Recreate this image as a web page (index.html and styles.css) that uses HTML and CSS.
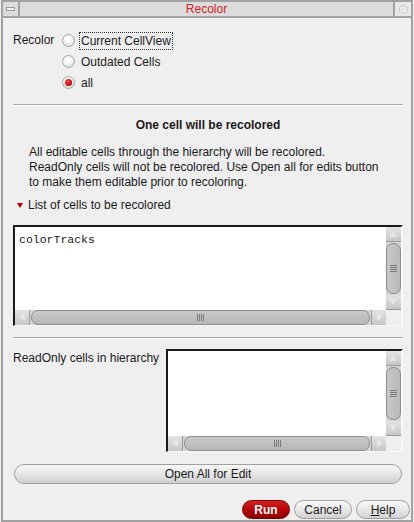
FILE: index.html
```html
<!DOCTYPE html>
<html>
<head>
  <title>Recolor</title>
  <link rel="stylesheet" href="styles.css">
</head>
<body>
  <div class="window">
    <div class="titlebar">
      <div class="tb-btn tb-left"><span class="dash"></span></div>
      <div class="title">Recolor</div>
      <div class="tb-btn tb-right"><span class="ring"></span></div>
    </div>

    <div class="content">
      <div class="radio-group">
        <div class="radio-label">Recolor</div>
        <div class="radios">
          <div class="radio-row"><span class="radio"></span><span class="focus">Current CellView</span></div>
          <div class="radio-row"><span class="radio"></span><span class="opt">Outdated Cells</span></div>
          <div class="radio-row"><span class="radio checked"></span><span class="opt">all</span></div>
        </div>
      </div>

      <div class="sep sep-top"></div>

      <h3 class="heading">One cell will be recolored</h3>
      <p class="info">All editable cells through the hierarchy will be recolored.<br>
        ReadOnly cells will not be recolored. Use Open all for edits button<br>
        to make them editable prior to recoloring.</p>

      <div class="disclosure"><span class="tri"></span>List of cells to be recolored</div>

      <div class="listbox list-main">
        <div class="list-body">
          <div class="list-text">colorTracks</div>
          <div class="vscroll">
            <div class="arrow up"></div>
            <div class="vthumb"><span class="grip-h"></span></div>
            <div class="arrow down"></div>
          </div>
        </div>
        <div class="hscroll-row">
          <div class="hscroll">
            <div class="arrow left"></div>
            <div class="hthumb"><span class="grip-v"></span></div>
            <div class="arrow right"></div>
          </div>
          <div class="corner"></div>
        </div>
      </div>

      <div class="sep sep-mid"></div>

      <div class="readonly-row">
        <div class="ro-label">ReadOnly cells in hierarchy</div>
        <div class="listbox list-ro">
          <div class="list-body">
            <div class="list-text"></div>
            <div class="vscroll">
              <div class="arrow up"></div>
              <div class="vthumb"><span class="grip-h"></span></div>
              <div class="arrow down"></div>
            </div>
          </div>
          <div class="hscroll-row">
            <div class="hscroll">
              <div class="arrow left"></div>
              <div class="hthumb"><span class="grip-v"></span></div>
              <div class="arrow right"></div>
            </div>
            <div class="corner"></div>
          </div>
        </div>
      </div>

      <button class="wide-button">Open All for Edit</button>

      <div class="actions">
        <button class="btn btn-run">Run</button>
        <button class="btn">Cancel</button>
        <button class="btn btn-help"><u>H</u>elp</button>
      </div>
    </div>
  </div>
</body>
</html>
```

FILE: styles.css
```css
body {
  margin: 0;
  background-color: #efefef;
  font-family: "Liberation Sans", Arial, sans-serif;
  font-size: 12px;
  color: #1a1a1a;
}

.window {
  width: 408px;
  height: 518px;
  margin-left: 1px;
  border: 2px solid #a2a2a2;
  background-color: #efefef;
  overflow: hidden;
}

/* Title bar */
.titlebar {
  display: flex;
  height: 14px;
  background-color: #dcdcdc;
  border-bottom: 2px solid #a2a2a2;
}

.tb-btn {
  width: 15px;
  display: flex;
  align-items: center;
  justify-content: center;
}

.tb-left {
  border-right: 2px solid #a2a2a2;
}

.tb-right {
  width: 16px;
  border-left: 2px solid #a2a2a2;
  background-color: #e8e8e8;
}

.dash {
  width: 7px;
  height: 2px;
  border: 1px solid #9a9a9a;
  background-color: #f4f4f4;
}

.ring {
  width: 7px;
  height: 7px;
  border-radius: 50%;
  border: 1px dotted #a8a8a8;
}

.title {
  flex: 1;
  text-align: center;
  color: #d42020;
  line-height: 14px;
}

/* Content */
.content {
  padding: 0 8px 0 10px;
}

.radio-group {
  display: flex;
  margin-top: 12px;
}

.radio-label {
  width: 49px;
  line-height: 21px;
}

.radio-row {
  display: flex;
  align-items: center;
  height: 21px;
}

.radio {
  width: 11px;
  height: 11px;
  border-radius: 50%;
  border: 1px solid #a8a8a8;
  background: radial-gradient(circle at 45% 40%, #ffffff 20%, #dedede 75%, #c8c8c8 100%);
  margin-right: 5px;
  position: relative;
}

.radio.checked::after {
  content: "";
  position: absolute;
  left: 2px;
  top: 2px;
  width: 7px;
  height: 7px;
  border-radius: 50%;
  background: radial-gradient(circle at 40% 35%, #ff4a4a, #c00000 70%);
}

.focus {
  outline: 1px dotted #333;
  padding: 1px 1px;
  line-height: 14px;
}

.opt {
  padding-left: 1px;
}

.sep {
  height: 0;
  border-top: 1px solid #a8a8a8;
  border-bottom: 1px solid #ffffff;
}

.sep-top {
  margin-top: 11px;
}

.heading {
  margin: 12px 0 0 0;
  font-size: 12px;
  font-weight: bold;
  text-align: center;
  line-height: 15px;
}

.info {
  margin: 12px -8px 0 16px;
  line-height: 15px;
  white-space: nowrap;
}

.disclosure {
  display: flex;
  align-items: center;
  margin-top: 8px;
  padding-left: 4px;
  line-height: 15px;
}

.tri {
  width: 0;
  height: 0;
  border-left: 3px solid transparent;
  border-right: 3px solid transparent;
  border-top: 5px solid #c00000;
  margin-right: 5px;
}

/* List boxes */
.listbox {
  background-color: #fff;
  border-top: 2px solid #1a1a1a;
  border-left: 2px solid #1a1a1a;
  border-right: 2px solid #f8f8f8;
  border-bottom: 1px solid #f8f8f8;
  display: flex;
  flex-direction: column;
}

.list-main {
  margin-top: 12px;
  height: 98px;
}

.list-body {
  flex: 1;
  display: flex;
}

.list-text {
  flex: 1;
  padding: 6px 4px;
  font-family: "Liberation Mono", "DejaVu Sans Mono", monospace;
  font-size: 11.5px;
}

.vscroll {
  width: 15px;
  display: flex;
  flex-direction: column;
  background-color: #d4d4d4;
}

.arrow {
  width: 15px;
  height: 15px;
  background: linear-gradient(#e4e4e4, #c6c6c6);
  border-bottom: 1px solid #9a9a9a;
  box-sizing: border-box;
  position: relative;
}

.arrow::after {
  content: "";
  position: absolute;
  width: 0;
  height: 0;
}

.arrow.up::after {
  left: 3px;
  top: 4px;
  border-left: 4px solid transparent;
  border-right: 4px solid transparent;
  border-bottom: 6px solid #e6e6e6;
}

.arrow.down::after {
  left: 3px;
  top: 4px;
  border-left: 4px solid transparent;
  border-right: 4px solid transparent;
  border-top: 6px solid #e6e6e6;
}

.arrow.left::after {
  left: 4px;
  top: 3px;
  border-top: 4px solid transparent;
  border-bottom: 4px solid transparent;
  border-right: 6px solid #e6e6e6;
}

.arrow.right::after {
  left: 5px;
  top: 3px;
  border-top: 4px solid transparent;
  border-bottom: 4px solid transparent;
  border-left: 6px solid #e6e6e6;
}

.vthumb {
  flex: 1;
  margin: 1px 0;
  background: linear-gradient(90deg, #c8c8c8, #bababa);
  border: 1px solid #8e8e8e;
  border-radius: 7px;
  display: flex;
  align-items: center;
  justify-content: center;
}

.grip-h {
  width: 7px;
  height: 7px;
  background: repeating-linear-gradient(#7a7a7a 0 1px, transparent 1px 2px);
}

.hscroll-row {
  display: flex;
  height: 15px;
}

.hscroll {
  flex: 1;
  display: flex;
  background-color: #d4d4d4;
}

.hscroll .arrow {
  border-bottom: none;
  border-right: 1px solid #9a9a9a;
}

.hscroll .arrow.right {
  border-right: none;
  border-left: 1px solid #9a9a9a;
}

.hthumb {
  flex: 1;
  margin: 0 1px;
  background: linear-gradient(#c8c8c8, #b8b8b8);
  border: 1px solid #8e8e8e;
  border-radius: 7px;
  display: flex;
  align-items: center;
  justify-content: center;
}

.grip-v {
  width: 7px;
  height: 7px;
  background: repeating-linear-gradient(90deg, #7a7a7a 0 1px, transparent 1px 2px);
}

.corner {
  width: 15px;
  background-color: #efefef;
}

.sep-mid {
  margin-top: 11px;
}

.readonly-row {
  display: flex;
  margin-top: 10px;
}

.ro-label {
  width: 153px;
  padding-top: 2px;
  line-height: 15px;
}

.list-ro {
  flex: 1;
  height: 100px;
}

/* Buttons */
.wide-button {
  display: block;
  width: 388px;
  height: 20px;
  margin: 12px 0 0 1px;
  font-family: inherit;
  font-size: 12px;
  color: #1a1a1a;
  background: linear-gradient(#f8f8f8, #e2e2e2 60%, #cfcfcf);
  border: 1px solid #a0a0a0;
  border-radius: 10px;
}

.actions {
  display: flex;
  justify-content: flex-end;
  gap: 4px;
  margin: 16px -7px 0 0;
}

.btn {
  height: 19px;
  min-width: 58px;
  padding: 0 8px;
  font-family: inherit;
  font-size: 12px;
  color: #1a1a1a;
  background: linear-gradient(#fafafa, #e4e4e4 60%, #d0d0d0);
  border: 1px solid #a0a0a0;
  border-radius: 10px;
}

.btn-run {
  min-width: 48px;
  color: #fff;
  font-weight: bold;
  background: linear-gradient(#d62020, #b00000 60%, #8c0000);
  border-color: #7a0000;
}

.btn-help {
  min-width: 54px;
}
```
